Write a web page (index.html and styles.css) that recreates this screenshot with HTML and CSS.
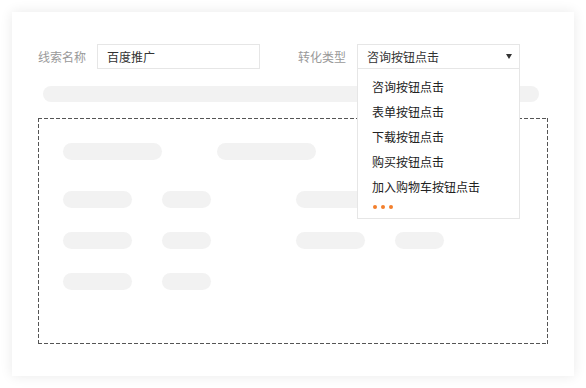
FILE: index.html
```html
<!DOCTYPE html>
<html lang="zh-CN">
<head>
    <meta charset="UTF-8">
    <meta name="viewport" content="width=device-width, initial-scale=1.0">
    <title>线索转化</title>
    <link rel="stylesheet" href="styles.css">
</head>
<body>
    <div class="card">
        <div class="form-row">
            <div class="field">
                <label class="field-label">线索名称</label>
                <div class="text-input">百度推广</div>
            </div>
            <div class="field field-select">
                <label class="field-label">转化类型</label>
                <div class="select">
                    <span>咨询按钮点击</span>
                    <span class="arrow"></span>
                </div>
                <ul class="dropdown">
                    <li>咨询按钮点击</li>
                    <li>表单按钮点击</li>
                    <li>下载按钮点击</li>
                    <li>购买按钮点击</li>
                    <li>加入购物车按钮点击</li>
                    <li class="more"><i></i><i></i><i></i></li>
                </ul>
            </div>
        </div>

        <div class="bar"></div>

        <div class="drop-zone">
            <div class="row-head">
                <span class="pill pill-lg"></span>
                <span class="pill pill-lg"></span>
            </div>
            <div class="grid">
                <span class="pill pill-md"></span>
                <span class="pill pill-sm"></span>
                <span class="pill pill-md"></span>
                <span class="pill pill-sm"></span>

                <span class="pill pill-md"></span>
                <span class="pill pill-sm"></span>
                <span class="pill pill-md"></span>
                <span class="pill pill-sm"></span>

                <span class="pill pill-md"></span>
                <span class="pill pill-sm"></span>
            </div>
        </div>
    </div>
</body>
</html>
```

FILE: styles.css
```css
* {
    margin: 0;
    padding: 0;
    box-sizing: border-box;
}

body {
    font-family: "Noto Sans CJK SC", "Noto Sans", sans-serif;
    font-size: 12px;
    color: #333;
    background: #fff;
    padding: 12px;
}

.card {
    width: 562px;
    height: 364px;
    background: #fff;
    box-shadow: 0 0 12px rgba(0, 0, 0, 0.09);
    padding: 32px 26px 0 26px;
}

.form-row {
    display: flex;
    align-items: center;
    gap: 38px;
    height: 25px;
}

.field {
    display: flex;
    align-items: center;
    gap: 11px;
}

.field-select {
    position: relative;
}

.field-label {
    color: #999;
    width: 48px;
    white-space: nowrap;
    line-height: 25px;
}

.text-input,
.select {
    width: 163px;
    height: 25px;
    border: 1px solid #e6e6e6;
    padding: 0 9px;
    line-height: 23px;
    color: #333;
    background: #fff;
}

.select {
    display: flex;
    justify-content: space-between;
    align-items: center;
    padding-right: 7px;
}

.arrow {
    width: 0;
    height: 0;
    border-left: 3px solid transparent;
    border-right: 3px solid transparent;
    border-top: 5px solid #333;
}

.dropdown {
    position: absolute;
    top: 25px;
    left: 59px;
    width: 163px;
    height: 150px;
    list-style: none;
    background: #fff;
    border: 1px solid #e6e6e6;
    border-top: none;
    padding: 5px 0 0 14px;
    z-index: 2;
}

.dropdown li {
    height: 25px;
    line-height: 25px;
    color: #222;
}

.dropdown .more {
    display: flex;
    align-items: center;
    gap: 4px;
    height: 16px;
    padding-left: 1px;
}

.dropdown .more i {
    width: 4px;
    height: 4px;
    border-radius: 50%;
    background: #f37f2c;
}

.bar {
    margin: 17px 0 0 5px;
    width: 496px;
    height: 16px;
    border-radius: 8px;
    background: #f2f2f2;
}

.drop-zone {
    margin-top: 16px;
    width: 510px;
    height: 226px;
    padding: 25px 0 0 25px;
    background:
        repeating-linear-gradient(90deg, #555 0 4px, transparent 4px 6px) top left / 100% 1px no-repeat,
        repeating-linear-gradient(90deg, #555 0 4px, transparent 4px 6px) bottom left / 100% 1px no-repeat,
        repeating-linear-gradient(180deg, #555 0 4px, transparent 4px 6px) top left / 1px 100% no-repeat,
        repeating-linear-gradient(180deg, #555 0 4px, transparent 4px 6px) top right / 1px 100% no-repeat;
}

.row-head {
    display: flex;
    gap: 55px;
}

.grid {
    margin-top: 31px;
    display: grid;
    grid-template-columns: 69px 49px 124px 49px;
    column-gap: 30px;
    row-gap: 24px;
}

.grid .pill:nth-child(4n+3) {
    margin-left: 55px;
}

.pill {
    display: block;
    height: 17px;
    border-radius: 9px;
    background: #f2f2f2;
}

.pill-lg {
    width: 99px;
}

.pill-md {
    width: 69px;
}

.pill-sm {
    width: 49px;
}
```
